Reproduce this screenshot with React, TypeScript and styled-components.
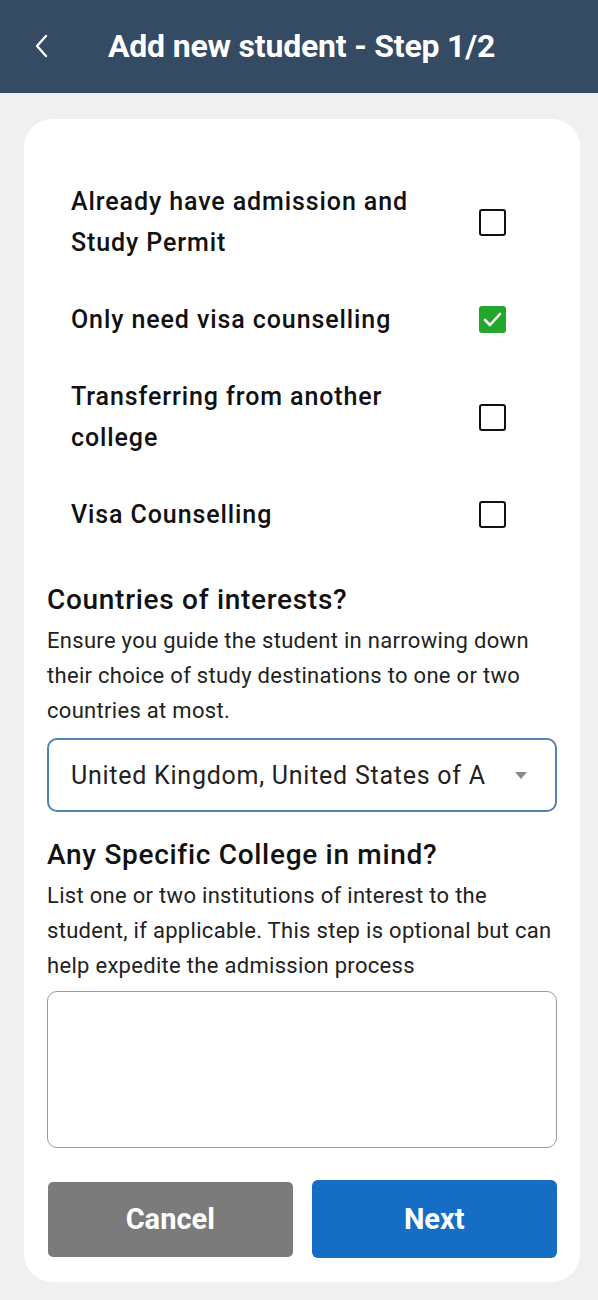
import React from "react";
import styled, { createGlobalStyle } from "styled-components";

const Global = createGlobalStyle`
  html, body { margin: 0; padding: 0; background: #f0f0f0; }
  body { font-family: Roboto, "Noto Sans", Arial, sans-serif; color: #111; }
  * { box-sizing: border-box; }
`;

const Page = styled.div`
  width: 598px;
  min-height: 1300px;
  background: #f0f0f0;
  display: flex;
  flex-direction: column;
`;

const Header = styled.header`
  height: 93px;
  background: #354a63;
  display: flex;
  align-items: center;
  padding-left: 33px;
  padding-bottom: 2px;
`;

const BackButton = styled.button`
  border: none;
  background: transparent;
  padding: 0;
  width: 16px;
  height: 26px;
  display: flex;
  align-items: center;
  justify-content: center;
  cursor: pointer;
`;

const Title = styled.h1`
  margin: 0 0 0 59px;
  font-size: 32px;
  font-weight: 700;
  color: #fff;
  letter-spacing: -0.2px;
`;

const Card = styled.main`
  margin: 26px 18px 17px 24px;
  background: #fff;
  border-radius: 28px;
  padding: 62px 23px 24px 23px;
  display: flex;
  flex-direction: column;
`;

const OptionList = styled.div`
  display: flex;
  flex-direction: column;
  gap: 36px;
  padding: 0 51px 0 24px;
`;

const OptionRow = styled.label`
  display: flex;
  align-items: center;
  justify-content: space-between;
  gap: 40px;
`;

const OptionText = styled.span`
  flex: 1;
  font-size: 25px;
  line-height: 41px;
  font-weight: 500;
  letter-spacing: 0.9px;
  color: #111;
`;

const Box = styled.span<{ $checked?: boolean }>`
  width: 27px;
  height: 27px;
  flex: none;
  border-radius: 3px;
  border: ${(p) => (p.$checked ? "none" : "2.5px solid #111")};
  background: ${(p) => (p.$checked ? "#22a62b" : "#fff")};
  display: flex;
  align-items: center;
  justify-content: center;
`;

const SectionTitle = styled.h2<{ $top: number }>`
  margin: ${(p) => p.$top}px 0 5px;
  font-size: 28px;
  line-height: 36px;
  font-weight: 500;
  letter-spacing: 0.7px;
  color: #111;
`;

const Hint = styled.p`
  margin: 0;
  font-size: 22px;
  line-height: 35px;
  color: #222;
  letter-spacing: 0.3px;
`;

const Select = styled.div`
  margin-top: 10px;
  height: 74px;
  border: 2px solid #4f82b5;
  border-radius: 10px;
  display: flex;
  align-items: center;
  padding: 0 28px 0 22px;
  gap: 26px;
`;

const SelectValue = styled.span`
  flex: 1;
  font-size: 25px;
  white-space: nowrap;
  overflow: hidden;
  color: #222;
  letter-spacing: 0.75px;
`;

const Caret = styled.span`
  width: 0;
  height: 0;
  border-left: 6px solid transparent;
  border-right: 6px solid transparent;
  border-top: 7px solid #8a8a8a;
`;

const TextArea = styled.textarea`
  margin-top: 8px;
  height: 157px;
  border: 1.5px solid #9a9a9a;
  border-radius: 10px;
  resize: none;
  outline: none;
  font-family: inherit;
  font-size: 20px;
  padding: 12px 16px;
`;

const Actions = styled.div`
  margin-top: 32px;
  display: grid;
  grid-template-columns: 1fr 1fr;
  gap: 19px;
  align-items: center;
`;

const Button = styled.button<{ $primary?: boolean }>`
  height: ${(p) => (p.$primary ? 78 : 75)}px;
  border: none;
  border-radius: ${(p) => (p.$primary ? 6 : 5)}px;
  background: ${(p) => (p.$primary ? "#156ec4" : "#7b7b7b")};
  color: #fff;
  font-family: inherit;
  font-size: 29px;
  font-weight: 700;
  margin-left: ${(p) => (p.$primary ? 0 : 1)}px;
  cursor: pointer;
`;

const options = [
  { label: "Already have admission and Study Permit", checked: false },
  { label: "Only need visa counselling", checked: true },
  { label: "Transferring from another college", checked: false },
  { label: "Visa Counselling", checked: false },
];

export default function App() {
  return (
    <>
      <Global />
      <Page>
        <Header>
          <BackButton aria-label="Back">
            <svg width="14" height="24" viewBox="0 0 14 24" fill="none">
              <path d="M12 2 L3 12 L12 22" stroke="#fff" strokeWidth="2.4" strokeLinecap="round" strokeLinejoin="round" />
            </svg>
          </BackButton>
          <Title>Add new student - Step 1/2</Title>
        </Header>
        <Card>
          <OptionList>
            {options.map((o) => (
              <OptionRow key={o.label}>
                <OptionText>{o.label}</OptionText>
                <Box $checked={o.checked}>
                  {o.checked && (
                    <svg width="19" height="15" viewBox="0 0 19 15" fill="none">
                      <path d="M2 8 L7 13 L17 2" stroke="#fff" strokeWidth="2.6" strokeLinecap="round" strokeLinejoin="round" />
                    </svg>
                  )}
                </Box>
              </OptionRow>
            ))}
          </OptionList>

          <SectionTitle $top={47}>Countries of interests?</SectionTitle>
          <Hint>
            Ensure you guide the student in narrowing down their choice of study destinations to one or two countries at most.
          </Hint>
          <Select>
            <SelectValue>United Kingdom, United States of A</SelectValue>
            <Caret />
          </Select>

          <SectionTitle $top={25}>Any Specific College in mind?</SectionTitle>
          <Hint>
            List one or two institutions of interest to the student, if applicable. This step is optional but can help expedite the admission process
          </Hint>
          <TextArea />

          <Actions>
            <Button>Cancel</Button>
            <Button $primary>Next</Button>
          </Actions>
        </Card>
      </Page>
    </>
  );
}
